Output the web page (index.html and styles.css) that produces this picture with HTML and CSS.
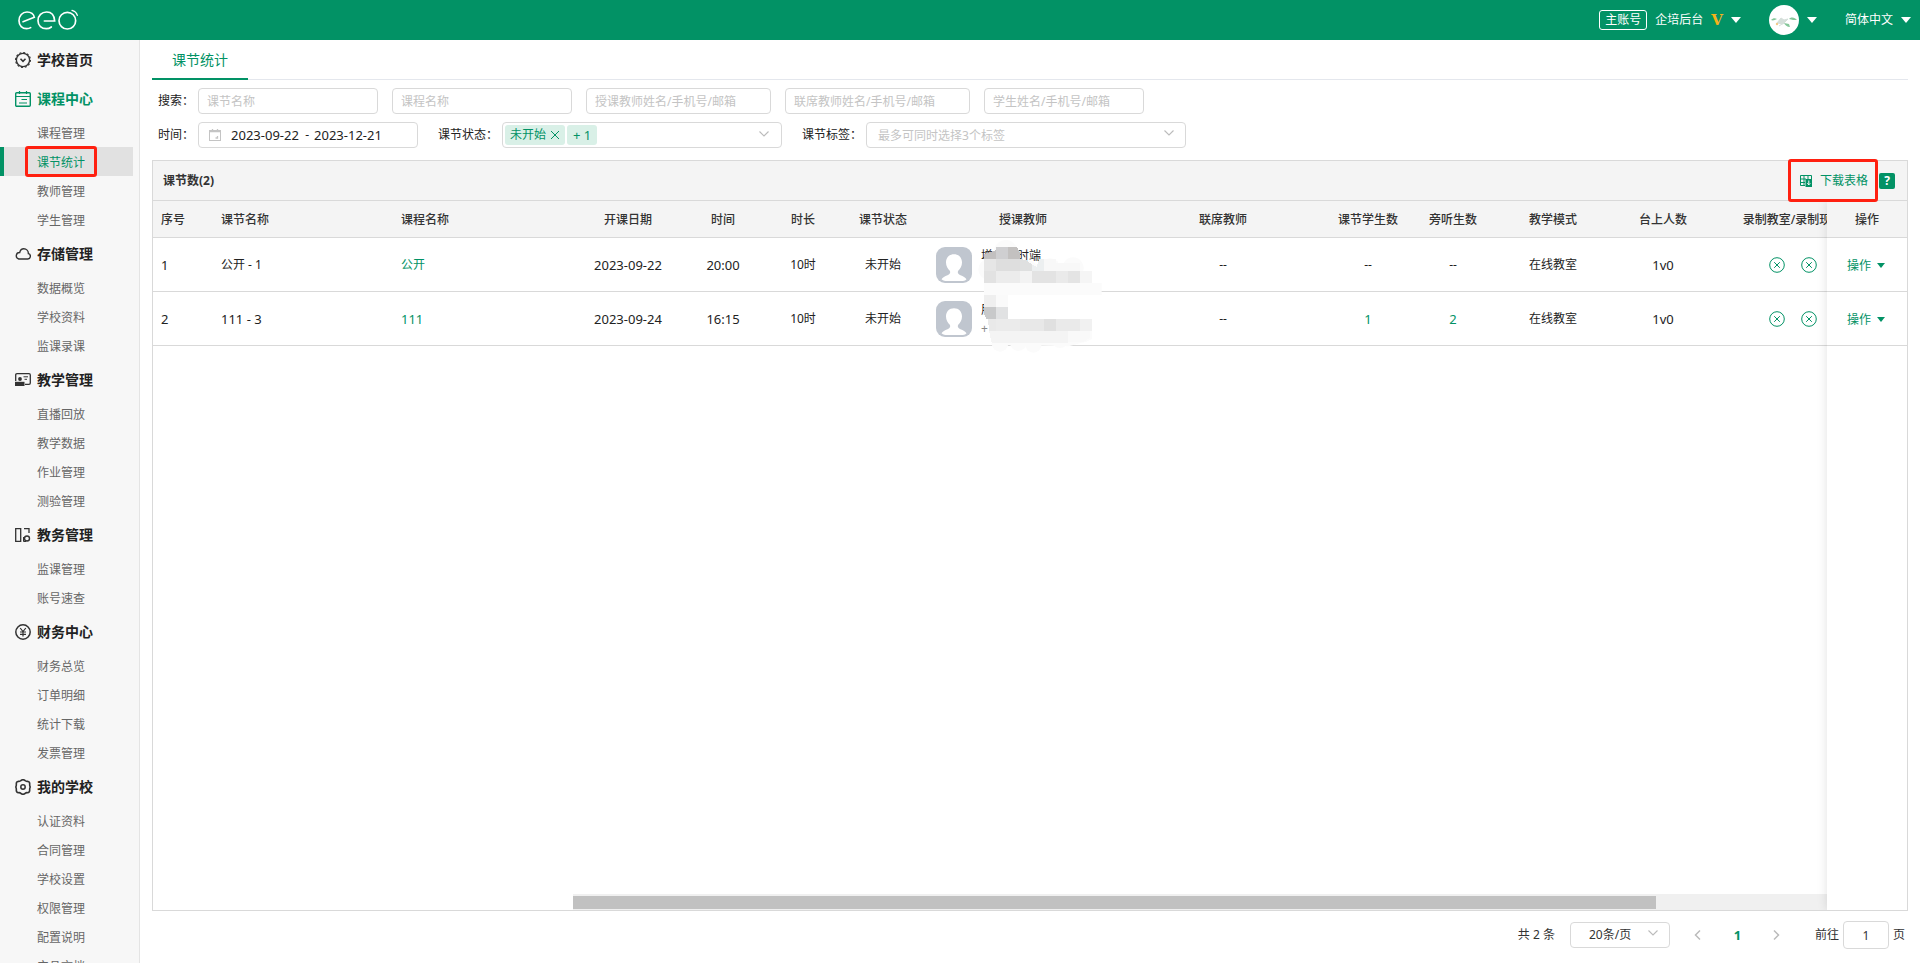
FILE: index.html
```html
<!DOCTYPE html>
<html lang="zh-CN">
<head>
<meta charset="utf-8">
<title>课节统计</title>
<link rel="stylesheet" href="styles.css">
</head>
<body>
<svg width="0" height="0" class="defs" aria-hidden="true">
  <symbol id="chevron" viewBox="0 0 12 12"><path d="M1.500 3.500 6 8l4.500-4.500" fill="none" stroke="currentColor" stroke-width="1.100"/></symbol>
  <symbol id="cross-circle" viewBox="0 0 16 16"><circle cx="8" cy="8" r="7.300" fill="none" stroke="currentColor"/><path d="m5.200 5.200 5.600 5.600m0-5.600-5.600 5.600" stroke="currentColor"/></symbol>
  <symbol id="person" viewBox="0 0 36 36"><rect width="36" height="36" rx="9" fill="#c0c6cf"/><path d="M18 7.300c-4.800 0-8 3.400-8 8.200 0 3.500 1.700 6.500 4 8.500.7 2.200-.4 3.400-2.500 4.200-2.700 1-4.800 2-6 4C7.500 33.700 9 34 11 34h14c2.500 0 4.200-.3 5.500-1.800-1.200-2-3.300-3-6-4-2.100-.8-3.200-2-2.500-4.200 2.300-2 4-5 4-8.500 0-4.800-3.200-8.200-8-8.200z" fill="#fff"/></symbol>
</svg>

<header class="topbar">
  <a href="#" class="logo" aria-label="eeo">
    <svg width="62" height="22" viewBox="0 0 186 66" fill="none" stroke="#fff" stroke-width="5" stroke-linecap="round">
      <path d="M18 38 52 25C50 15 41 9 30 9 16 9 6 20 6 35s10 24 23 24c5 0 9-1 12-3"/>
      <path d="M82 36h31C112 19 103 9 89 9 74 9 63 20 63 35s11 24 25 24c6 0 11-2 15-5"/>
      <circle cx="151" cy="35" r="25"/>
      <path d="M165 4c8 2 14 8 16 15" stroke-width="4"/>
    </svg>
  </a>
  <div class="account">
    <span class="badge">主账号</span>
    <span>企培后台</span>
    <b class="vip">V</b>
    <button class="caret" aria-label="切换账号"></button>
  </div>
  <div class="user">
    <svg class="face" width="30" height="30" viewBox="0 0 30 30" aria-hidden="true">
      <circle cx="15" cy="15" r="15" fill="#fff"/>
      <path d="M2 15c2-2 4-2 6-1-2 1-4 2-6 1zM20 14c3-3 6-1 8 1-3 0-5 0-8-1zM15 18l5 1 1 3c-3 0-5-2-6-4z" fill="#86c79a"/>
      <path d="m8 18 6 1 5-5-4 1-3-2zM10 21l6-4" fill="#d5dfda" stroke="#d5dfda"/>
      <circle cx="8" cy="19" r="1.200" fill="#f3c98a"/>
    </svg>
    <button class="caret" aria-label="用户菜单"></button>
  </div>
  <button class="lang">简体中文<i class="caret"></i></button>
</header>

<div class="shell">
<nav class="sidebar">
  <a href="#" class="head"><svg class="ico" viewBox="0 0 16 16"><circle cx="8" cy="8" r="6.600" stroke-width="1.300"/><circle cx="8" cy="8" r="7.400" stroke-width="1.200" stroke-dasharray="2 1.870"/><path d="M5.500 6.800 8 9.300l2.500-2.500" stroke-width="1.600"/></svg>学校首页</a>

  <a href="#" class="head on"><svg class="ico" viewBox="0 0 16 16"><rect x=".7" y="1.700" width="14.600" height="13.600" rx="1" stroke-width="1.400"/><path d="M1 5.500h14M4.500 0v3M11.500 0v3M6.500 8.500H12M4 12h8" stroke-width="1.200"/></svg>课程中心</a>
  <ul><li><a href="#">课程管理</a></li><li class="current"><a href="#">课节统计</a></li><li><a href="#">教师管理</a></li><li><a href="#">学生管理</a></li></ul>

  <a href="#" class="head"><svg class="ico" viewBox="0 0 16 16"><path d="M3.800 13h9a2.700 2.700 0 0 0 .6-5.300c0-3-2-4.900-4.600-4.900-2.300 0-3.600 1.500-4.100 3.700A3.300 3.300 0 0 0 3.800 13z" stroke-width="1.400"/></svg>存储管理</a>
  <ul><li><a href="#">数据概览</a></li><li><a href="#">学校资料</a></li><li><a href="#">监课录课</a></li></ul>

  <a href="#" class="head"><svg class="ico" viewBox="0 0 16 16"><path d="M.7 9V3q0-1.300 1.300-1.300h12q1.300 0 1.300 1.300v8q0 1.300-1.300 1.300h-4" stroke-width="1.300"/><path d="M8.500 4.800H13M9.500 7.300h2.500" /><circle cx="5" cy="7" r="1.900" fill="currentColor" stroke="none"/><path d="M0 9.800h9.500V14H0z" fill="currentColor" stroke="none"/></svg>教学管理</a>
  <ul><li><a href="#">直播回放</a></li><li><a href="#">教学数据</a></li><li><a href="#">作业管理</a></li><li><a href="#">测验管理</a></li></ul>

  <a href="#" class="head"><svg class="ico" viewBox="0 0 16 16"><path d="M.7 1.700h5v12.600h-5zM9 1.700h5V6" stroke-width="1.300"/><circle cx="12" cy="11.500" r="2.500" stroke-width="1.400"/><path d="M8.500 10v4.500H11" /></svg>教务管理</a>
  <ul><li><a href="#">监课管理</a></li><li><a href="#">账号速查</a></li></ul>

  <a href="#" class="head"><svg class="ico" viewBox="0 0 16 16"><circle cx="8" cy="8" r="7.200" stroke-width="1.500"/><path d="m5.200 4 2.800 3.500L10.800 4M8 7.500v5M5 8h6M5 10.300h6" stroke-width="1.200"/></svg>财务中心</a>
  <ul><li><a href="#">财务总览</a></li><li><a href="#">订单明细</a></li><li><a href="#">统计下载</a></li><li><a href="#">发票管理</a></li></ul>

  <a href="#" class="head"><svg class="ico" viewBox="0 0 16 16"><path d="M6 1.500Q8 0 10 1.500q1 1 2.500.8 2.300.4 2.200 2.700-.2 1.500.5 3-.7 1.500-.5 3 .1 2.300-2.200 2.700-1.500-.2-2.500.8-2 1.500-4 0-1-1-2.500-.8-2.300-.4-2.200-2.700.2-1.500-.5-3 .7-1.500.5-3-.1-2.300 2.200-2.700Q5 2.500 6 1.500z" stroke-width="1.600"/><circle cx="8" cy="8" r="2.200" stroke-width="1.500"/></svg>我的学校</a>
  <ul><li><a href="#">认证资料</a></li><li><a href="#">合同管理</a></li><li><a href="#">学校设置</a></li><li><a href="#">权限管理</a></li><li><a href="#">配置说明</a></li><li><a href="#">产品文档</a></li></ul>
</nav>

<main class="main">
  <div class="tabs"><a href="#" class="tab">课节统计</a></div>

  <form class="filters">
    <div class="line search">
      <label for="q1">搜索：</label>
      <input id="q1" class="box w180" placeholder="课节名称">
      <input class="box w180" placeholder="课程名称" aria-label="课程名称">
      <input class="box w185" placeholder="授课教师姓名/手机号/邮箱" aria-label="授课教师">
      <input class="box w185" placeholder="联席教师姓名/手机号/邮箱" aria-label="联席教师">
      <input class="box w160" placeholder="学生姓名/手机号/邮箱" aria-label="学生">
    </div>
    <div class="line">
      <label for="from">时间：</label>
      <div class="box range">
        <svg width="12" height="12" viewBox="0 0 12 12" fill="none" stroke="#c4c4c4"><rect x=".5" y="1.500" width="11" height="10"/><path d="M1 2.500h10M3.500 0v2M8.500 0v2M8.500 7v2h-2" stroke-width="1.300"/></svg>
        <input id="from" value="2023-09-22"><span>-</span><input value="2023-12-21" aria-label="结束日期">
      </div>
      <label for="status">课节状态：</label>
      <div class="box tags">
        <span class="tag">未开始<button type="button" aria-label="移除"><svg width="10" height="10" viewBox="0 0 10 10" stroke="currentColor"><path d="m1 1 8 8m0-8-8 8"/></svg></button></span>
        <span class="tag">+ 1</span>
        <input id="status">
        <svg class="chev" width="12" height="12"><use href="#chevron"/></svg>
      </div>
      <label for="label">课节标签：</label>
      <div class="pick w320">
        <select id="label" class="box hint"><option>最多可同时选择3个标签</option></select>
        <svg class="chev" width="12" height="12"><use href="#chevron"/></svg>
      </div>
    </div>
  </form>

  <section class="panel">
    <div class="title">
      <h2>课节数(2)</h2>
      <button class="download">
        <svg width="12" height="12" viewBox="0 0 12 12" fill="none" stroke="currentColor"><path d="M11.500 4V.500H.5v10H5M.5 4H6M.5 7.500H5M4 .500v10M8 .500V4"/><path d="M5.500 4H12v8H5.500z" fill="currentColor" stroke="none"/><path d="M8.800 5.500v4.300M7.300 8.300l1.500 1.500 1.500-1.500" stroke="#fff"/></svg>
        下载表格
      </button>
      <button class="help" aria-label="帮助">?</button>
    </div>
    <div class="body">
      <div class="scroller">
        <table class="data">
          <colgroup><col class="c60"><col class="c180"><col class="c180"><col class="c110"><col class="c80"><col class="c80"><col class="c80"><col class="c200"><col class="c200"><col class="c90"><col class="c80"><col class="c120"><col class="c100"><col class="c160"></colgroup>
          <thead><tr><th class="l">序号</th><th class="l">课节名称</th><th class="l">课程名称</th><th>开课日期</th><th>时间</th><th>时长</th><th>课节状态</th><th>授课教师</th><th>联席教师</th><th>课节学生数</th><th>旁听生数</th><th>教学模式</th><th>台上人数</th><th>录制教室/录制现场</th></tr></thead>
          <tbody>
            <tr><td class="l num">1</td><td class="l">公开 - 1</td><td class="l"><a href="#">公开</a></td><td class="num">2023-09-22</td><td class="num">20:00</td><td>10时</td><td>未开始</td>
              <td class="teacher"><div class="who"><svg width="36" height="36"><use href="#person"/></svg><div class="name"><span>增　　时端</span></div></div>
                <svg class="mosaic" width="140" height="120" viewBox="0 0 420 360" aria-hidden="true">
                  <g fill="#fbfbfb"><circle cx="107" cy="47" r="35"/><circle cx="56" cy="100" r="31"/><circle cx="240" cy="98" r="31"/><circle cx="309" cy="96" r="32"/><path d="M42 75h144l36 30h144v36h29v36H114v36h-30l-42-10z"/><path d="M57 249h309v60l-20 8-50 14-230-6z"/><circle cx="90" cy="322" r="25"/><circle cx="145" cy="320" r="25"/><circle cx="190" cy="325" r="25"/><circle cx="270" cy="310" r="26"/><circle cx="340" cy="294" r="25"/></g>
                  <path d="M114 177h300v72H114z" fill="#fff"/>
                  <g shape-rendering="crispEdges">
                    <path d="M42 55 78 42v27H42z" fill="#c2c0c0"/><path d="M78 33h36v36H78z" fill="#cfcfd1"/><path d="M114 33h27l9 18v18h-36z" fill="#c3c1c0"/>
                    <path d="M42 69h36v36H42z" fill="#e6e6e6"/><path d="M78 69h72v36H78z" fill="#dedede"/><path d="M150 69l18 3 18 14v19h-36z" fill="#dfe0e0"/><path d="M186 86l14 6 8-23h14v36h-36z" fill="#eceff0"/><path d="M222 69h36v36h-36zM258 80h72v25h-72z" fill="#f8f8f8"/>
                    <path d="M42 105h36v36H42z" fill="#e2e2e2"/><path d="M78 105h72v36H78z" fill="#ececec"/><path d="M150 105h36v36h-36z" fill="#f3f3f3"/><path d="M186 105h72v36h-72z" fill="#e3e3e3"/><path d="M258 105h36v36h-36z" fill="#eaeaea"/><path d="M294 105h36v36h-36z" fill="#e4e4e4"/><path d="M330 105h36v36h-36z" fill="#f5f5f5"/>
                    <path d="M42 177h36v36H42z" fill="#efefef"/><path d="M78 177h36v36H78z" fill="#fafafa"/><path d="M42 213h36v36H50l-8-14z" fill="#c8c9ca"/><path d="M78 213h36v36H78z" fill="#e1e2e3"/>
                    <path d="M54 249h24v36H57z" fill="#e9e9e9"/><path d="M78 249h72v36H78z" fill="#ebebeb"/><path d="M150 249h72v36h-72z" fill="#e8e8e8"/><path d="M222 249h36v36h-36z" fill="#e0e0e0"/><path d="M258 249h72v36h-72z" fill="#eaeaea"/><path d="M330 249h36v36h-36z" fill="#f1f1f1"/>
                    <path d="M57 285h237v36H65z" fill="#f4f4f4"/><path d="M294 285h66v20l-20 13h-46z" fill="#f9f9f9"/>
                  </g>
                </svg></td>
              <td>--</td><td>--</td><td>--</td><td>在线教室</td><td class="num">1v0</td><td><div class="marks"><svg width="16" height="16"><use href="#cross-circle"/></svg><svg width="16" height="16"><use href="#cross-circle"/></svg></div></td></tr>
            <tr><td class="l num">2</td><td class="l num">111 - 3</td><td class="l num"><a href="#">111</a></td><td class="num">2023-09-24</td><td class="num">16:15</td><td>10时</td><td>未开始</td>
              <td class="teacher"><div class="who"><svg width="36" height="36"><use href="#person"/></svg><div class="name"><span>朋</span><small>+</small></div></div></td>
              <td>--</td><td class="num"><a href="#">1</a></td><td class="num"><a href="#">2</a></td><td>在线教室</td><td class="num">1v0</td><td><div class="marks"><svg width="16" height="16"><use href="#cross-circle"/></svg><svg width="16" height="16"><use href="#cross-circle"/></svg></div></td></tr>
          </tbody>
        </table>
        <div class="track"><div class="thumb"></div></div>
      </div>
      <div class="pinned">
        <table class="data">
          <thead><tr><th>操作</th></tr></thead>
          <tbody><tr><td><button class="act">操作<i></i></button></td></tr><tr><td><button class="act">操作<i></i></button></td></tr></tbody>
        </table>
      </div>
    </div>
  </section>

  <footer class="pager">
    <span>共 2 条</span>
    <div class="pick w100">
      <select class="box size" aria-label="每页条数"><option>20条/页</option></select>
      <svg class="chev" width="12" height="12"><use href="#chevron"/></svg>
    </div>
    <div class="pages">
      <button aria-label="上一页"><svg width="8" height="12" viewBox="0 0 8 12"><path d="M6 1.500 1.500 6 6 10.500"/></svg></button>
      <button class="now">1</button>
      <button aria-label="下一页"><svg width="8" height="12" viewBox="0 0 8 12"><path d="M2 1.500 6.500 6 2 10.500"/></svg></button>
    </div>
    <div class="jump"><label for="page">前往</label><input id="page" class="box" value="1"><span>页</span></div>
  </footer>
</main>
</div>
</body>
</html>
```

FILE: styles.css
```css
*, ::before, ::after { box-sizing: border-box; }
body {
  margin: 0;
  height: 100vh;
  display: flex;
  flex-direction: column;
  overflow: hidden;
  font: 12px/16px "Noto Sans", "Noto Sans CJK SC", sans-serif;
  color: #222;
  background: #fff;
}
a { color: inherit; text-decoration: none; }
button { font: inherit; color: inherit; background: none; border: 0; padding: 0; cursor: pointer; }
input, select { font: inherit; color: inherit; }
svg { flex: none; }
.defs { position: absolute; }

/* top bar */
.topbar {
  flex: none;
  height: 40px;
  display: flex;
  align-items: center;
  gap: 28px;
  padding: 0 9px 0 17px;
  background: #029265;
  color: #fff;
}
.logo { margin-right: auto; height: 22px; }
.logo svg { display: block; }
.account, .user, .lang { display: flex; align-items: center; gap: 8px; }
.badge { border: 1px solid #fff; border-radius: 3px; padding: 1px 5px; }
.vip { font: bold 15px/16px "DejaVu Serif", serif; color: #f5b21a; }
.caret { width: 10px; height: 6px; background: #fff; clip-path: polygon(0 0, 100% 0, 50% 100%); }
.face { display: block; }

/* sidebar */
.shell { flex: 1; min-height: 0; display: flex; }
.sidebar { flex: none; width: 140px; overflow: hidden; background: #f7f7f7; border-right: 1px solid #e4e4e4; }
.sidebar ul { list-style: none; margin: 0; padding: 0; }
.head { display: flex; align-items: center; gap: 6px; height: 39px; padding-left: 15px; font-size: 14px; font-weight: 700; }
.ico { width: 16px; height: 16px; fill: none; stroke: currentColor; color: #333; }
.on, .on .ico { color: #029265; }
.sidebar li { position: relative; height: 29px; margin-right: 6px; }
.sidebar li a { display: block; padding-left: 37px; line-height: 31px; color: #666; }
.sidebar .current { background: #e1e1e1; border-left: 4px solid #029265; }
.sidebar .current a { padding-left: 33px; color: #029265; }
.current::after { content: ""; position: absolute; left: 21px; width: 72px; top: -1px; bottom: -1px; border: 3px solid #ff2010; border-radius: 3px; }

/* main column */
.main { flex: 1; min-width: 0; display: flex; flex-direction: column; padding: 0 12px 14px; }
.tabs { flex: none; height: 40px; display: flex; box-shadow: inset 0 -1px #e4e7ed; }
.tab { padding: 0 20px; line-height: 39px; font-size: 14px; color: #029265; border-bottom: 2px solid #029265; }

.filters { display: flex; flex-direction: column; gap: 8px; padding: 8px 6px 12px; }
.line { display: flex; align-items: center; }
.line label { flex: none; margin-right: 4px; }
.search { gap: 14px; }
.search label { margin-right: -10px; }
.box { height: 26px; border: 1px solid #d9d9d9; border-radius: 4px; background: #fff; padding: 0 8px; min-width: 0; }
.box::placeholder { color: #c4c4c4; }
.w100 { width: 100px; }
.w160 { width: 160px; }
.w180 { width: 180px; }
.w185 { width: 185px; }
.w320 { width: 320px; }
.range { width: 220px; margin-right: 20px; display: flex; align-items: center; padding: 0 10px; }
.range input { width: 68px; border: 0; padding: 0; font-size: 13px; }
.range svg { margin-right: 10px; }
.range span { width: 15px; text-align: right; padding-right: 5px; }
.tags { position: relative; width: 280px; margin-right: 20px; display: flex; align-items: center; gap: 2px; padding: 0 2px; }
.tags input { flex: 1; min-width: 0; border: 0; background: none; }
.tag { display: flex; align-items: center; gap: 4px; height: 20px; padding: 0 5px; border-radius: 3px; background: #d9f0e7; color: #029265; }
.tag + .tag { padding: 0 6px; font-size: 13px; }
.tag svg { display: block; }
.pick { position: relative; }
.pick select { width: 100%; appearance: none; }
.chev { position: absolute; right: 11px; top: 5px; color: #bbb; pointer-events: none; }
.pick .hint { color: #c4c4c4; padding: 1px 11px 0; }

/* table panel */
.panel { flex: 1; min-height: 0; display: flex; flex-direction: column; border: 1px solid #d9d9d9; }
.title { flex: none; height: 40px; display: flex; align-items: center; padding: 0 12px 0 10px; background: #f4f4f4; border-bottom: 1px solid #d9d9d9; }
.title h2 { margin: 0 auto 0 0; font-size: 12px; line-height: 16px; font-weight: 700; color: #333; }
.download { position: relative; z-index: 3; display: flex; align-items: center; gap: 8px; padding: 0 11px 0 12px; color: #029265; }
.download::after { content: ""; position: absolute; inset: -14px 1px -13px 0; border: 3px solid #ff2010; border-radius: 3px; }
.help { width: 16px; height: 16px; border-radius: 2px; background: #029265; color: #fff; font-weight: 700; }
.body { flex: 1; min-height: 0; display: flex; }
.scroller { flex: 1; min-width: 0; overflow: hidden; display: flex; flex-direction: column; }
.data { table-layout: fixed; border-collapse: separate; border-spacing: 0; }
.scroller .data { width: 1720px; }
.data th, .data td { padding: 0 8px; text-align: center; border-bottom: 1px solid #d9d9d9; white-space: nowrap; }
.data th { height: 37px; padding-top: 2px; background: #f4f4f4; color: #333; font-weight: 500; }
.data td { height: 54px; }
.data .l { text-align: left; }
.data .num { font-size: 13px; }
.data a, .marks, .act { color: #029265; }
.c60 { width: 60px; } .c80 { width: 80px; } .c90 { width: 90px; } .c100 { width: 100px; } .c110 { width: 110px; }
.c120 { width: 120px; } .c160 { width: 160px; } .c180 { width: 180px; } .c200 { width: 200px; }
.teacher { position: relative; }
.who { display: flex; gap: 9px; padding-left: 5px; text-align: left; }
.name { display: flex; flex-direction: column; gap: 3px; padding-top: 1px; }
.name small { font-size: 12px; color: #888; }
.mosaic { position: absolute; left: 47px; top: -2px; z-index: 1; }
.marks { display: flex; justify-content: center; gap: 16px; }
.pinned { flex: none; position: relative; z-index: 2; width: 80px; background: #fff; box-shadow: 0 0 10px rgba(0, 0, 0, .12); clip-path: inset(0 0 0 -12px); }
.pinned .data { width: 100%; }
.act { display: inline-flex; align-items: center; gap: 6px; padding: 2px 2px 0 0; }
.act i { width: 8px; height: 5px; background: currentColor; clip-path: polygon(0 0, 100% 0, 50% 100%); }
.track { margin: auto 0 0 420px; height: 16px; padding: 2px 0 1px; background: #f0f0f0; }
.thumb { width: 86.4%; height: 13px; background: #c1c1c1; }

/* pagination */
.pager { flex: none; display: flex; align-items: center; justify-content: flex-end; padding: 10px 3px 0 0; color: #333; }
.pager .pick { margin: 0 9px 0 15px; }
.size { padding: 0 18px; }
.pages { display: flex; }
.pages button { display: flex; justify-content: center; align-items: center; width: 39px; }
.pages svg { fill: none; stroke: #bbb; stroke-width: 1.5; }
.pages .now { color: #029265; font-weight: 700; font-size: 13px; }
.jump { display: flex; align-items: center; gap: 4px; margin-left: 19px; }
.jump input { width: 46px; height: 28px; text-align: center; }
```
